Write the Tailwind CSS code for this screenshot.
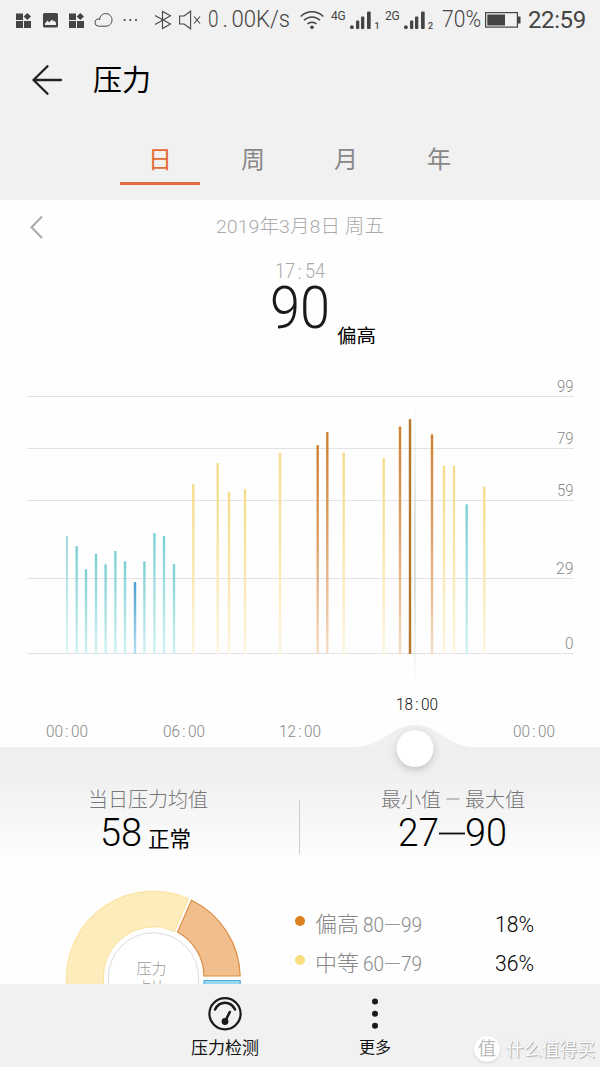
<!DOCTYPE html>
<html lang="zh-CN">
<head>
    <meta charset="UTF-8">
    <meta name="viewport" content="width=device-width, initial-scale=1.0">
    <title>压力</title>
    <script src="https://cdn.jsdelivr.net/npm/@tailwindcss/browser@4"></script>
</head>
<body class="bg-white">
<div class="w-[600px] h-[1067px] overflow-hidden flex flex-col bg-[#fefefe] font-['Roboto','Noto_Sans_CJK_SC',sans-serif] whitespace-nowrap">

    <header class="h-[200px] shrink-0 bg-[#f1f1f1]">
        <!-- Status bar -->
        <div class="h-10 flex items-center pl-4 text-[#444]">
            <svg class="w-[15px] h-[15px] shrink-0" viewBox="0 0 15 15" fill="currentColor"><path d="M0 .5h7v6.500H0zM0 8h7v7H0zM8 8h7v7H8zM11.300 0l3.700 3.500-3.700 3.500-3.700-3.500z"/></svg>
            <svg class="w-[15px] h-[15px] shrink-0 ml-3" viewBox="0 0 15 15"><rect width="15" height="14.5" rx="1.5" fill="currentColor"/><path d="M2 12v-1.500l2.500-3 1.700 2L9 6.500l1.500 2 1-1 1.500 2.500v2z" fill="#f1f1f1"/></svg>
            <svg class="w-[15px] h-[15px] shrink-0 ml-[11px]" viewBox="0 0 15 15" fill="currentColor"><path d="M0 .5h7v6.500H0zM0 8h7v7H0zM8 8h7v7H8zM11.300 0l3.700 3.500-3.700 3.500-3.700-3.500z"/></svg>
            <svg class="w-[19px] h-[14px] shrink-0 ml-[10px]" viewBox="0 0 19 14" fill="none" stroke="currentColor"><path d="M4.300 13.200a3.700 3.700 0 0 1-.4-7.300c.8 0 1.400.3 1.900.7C5.500 3 8.500.6 11.500.6c4 0 6.500 2.800 6.500 6.200 0 3.600-2.600 6.400-6 6.400z"/></svg>
            <svg class="w-[15px] h-[4px] shrink-0 ml-[10px]" viewBox="0 0 15 4" fill="currentColor"><circle cx="1.600" cy="2" r="1.100"/><circle cx="7.300" cy="2" r="1.100"/><circle cx="13" cy="2" r="1.100"/></svg>
            <svg class="w-[18px] h-[20px] shrink-0 ml-[16px]" viewBox="0 0 18 20" fill="none" stroke="currentColor" stroke-width="1.100"><path d="M1 5.500l15.500 8.500-8 4.500V1.500l8 4.300L1 14.500"/></svg>
            <svg class="w-[22px] h-[20px] shrink-0 ml-[7px]" viewBox="0 0 22 20" fill="none" stroke="currentColor" stroke-width="1.100"><path d="M.6 6h4.500l6.500-4.800v17.600L5.100 14H.6zM15 6.500l6 7M21 6.500l-6 7"/></svg>
            <svg class="w-[84px] h-[30px] shrink-0 ml-[7px] overflow-visible" viewBox="0 0 84 30" fill="currentColor" font-size="23" font-weight="300"><text x="0" y="21.500" textLength="10.500" lengthAdjust="spacingAndGlyphs">0</text><text x="14.500" y="21.500">.</text><text x="23.500" y="21.500" textLength="58.500" lengthAdjust="spacingAndGlyphs">00K/s</text></svg>
            <svg class="w-[24px] h-[20px] shrink-0 ml-[8px]" viewBox="0 0 24 20" fill="none" stroke="currentColor" stroke-width="1.500"><path d="M.7 6.500C7 0 17 0 23.300 6.500M4 10.300c4.500-4.500 11.500-4.500 16 0M7.500 14c2.500-2.500 6.500-2.500 9 0"/><circle cx="12" cy="17.300" r="1.800" fill="currentColor" stroke="none"/></svg>
            <span class="w-[19px] ml-[7px] -mt-2 text-xs leading-none tracking-tight">4G</span>
            <svg class="w-[29px] h-[20px] shrink-0" viewBox="0 0 29 20" fill="currentColor"><circle cx="1.900" cy="17.200" r="1.900"/><rect x="6" y="10.500" width="3.300" height="8.600" rx="1"/><rect x="11" y="6.500" width="3.300" height="12.600" rx="1"/><rect x="17" y="1.500" width="3.700" height="17.600" rx="1"/><text x="24.500" y="19" font-size="9" font-weight="500">1</text></svg>
            <span class="w-[19px] ml-[6px] -mt-2 text-xs leading-none tracking-tight">2G</span>
            <svg class="w-[31px] h-[20px] shrink-0" viewBox="0 0 31 20" fill="currentColor"><circle cx="1.900" cy="17.200" r="1.900"/><rect x="6" y="10.500" width="3.300" height="8.600" rx="1"/><rect x="11" y="6.500" width="3.300" height="12.600" rx="1"/><rect x="17" y="1.500" width="3.700" height="17.600" rx="1"/><text x="24" y="19" font-size="9" font-weight="500">2</text></svg>
            <svg class="w-[41px] h-[30px] shrink-0 ml-[7px] overflow-visible" viewBox="0 0 41 30" fill="currentColor"><text x="0" y="21.500" font-size="23" font-weight="300" textLength="39" lengthAdjust="spacingAndGlyphs">70%</text></svg>
            <svg class="w-[36px] h-[16px] shrink-0 ml-[2px]" viewBox="0 0 36 16"><rect x=".6" y=".6" width="31.800" height="14.500" fill="none" stroke="currentColor" stroke-width="1.200"/><path d="M2.300 2.500h17.700v11H2.300zM32.500 4.500h3v7h-3z" fill="currentColor"/></svg>
            <span class="ml-[7px] text-[24px] leading-none tracking-[-0.4px]">22:59</span>
        </div>

        <!-- Title -->
        <div class="h-20 flex items-center pl-8">
            <svg class="w-[31px] h-[30px]" viewBox="0 0 31 30" fill="none" stroke="#222" stroke-width="2.300" stroke-linecap="round" stroke-linejoin="round"><path d="M15.500 1.200L1.500 15l14 13.800M1.500 15h27.500"/></svg>
            <h1 class="ml-[30px] pt-[3px] text-[29px] leading-none text-black">压力</h1>
        </div>

        <!-- Tabs -->
        <nav class="flex pl-[120px] gap-[13px] text-2xl text-[#888]">
            <a class="w-20 h-[65px] border-b-[3px] border-[#e06f3c] text-[#e56a33] text-center leading-[81px]">日</a>
            <a class="w-20 h-[65px] text-center leading-[81px]">周</a>
            <a class="w-20 h-[65px] text-center leading-[81px]">月</a>
            <a class="w-20 h-[65px] text-center leading-[81px]">年</a>
        </nav>
    </header>

    <!-- Date and the selected reading -->
    <section class="h-[160px] shrink-0">
        <div class="h-[52px] flex items-center pl-[29px]">
            <svg class="w-4 h-6 mt-[1px]" viewBox="0 0 16 24" fill="none" stroke="#aaa" stroke-width="2"><path d="M13 1.500L2.500 12.300 13 23"/></svg>
            <svg class="w-[170px] h-8 ml-[171px]" viewBox="0 0 170 32" fill="#aaa" font-weight="300"><text x="0" y="22.500" font-size="19" textLength="168" lengthAdjust="spacingAndGlyphs">2019年3月8日 周五</text></svg>
        </div>
        <div class="flex pl-[270px]">
            <div class="w-[60px]">
                <svg class="w-[60px] h-[100px] overflow-visible" viewBox="0 0 60 100">
                    <g fill="#aaa" font-size="20" font-weight="300"><text x="5" y="25.500" textLength="20" lengthAdjust="spacingAndGlyphs">17</text><text x="27.500" y="26.500">:</text><text x="35" y="25.500" textLength="20" lengthAdjust="spacingAndGlyphs">54</text></g>
                    <text x="0" y="76" fill="#1a1a1a" font-size="60" font-weight="300" textLength="60" lengthAdjust="spacingAndGlyphs">90</text>
                </svg>
            </div>
            <span class="ml-[7px] mt-[75px] text-[19.500px] leading-none text-black">偏高</span>
        </div>
    </section>

    <!-- Day chart, its slider handle hangs over the summary -->
    <svg id="chart" class="relative z-10 w-[600px] h-[387px] shrink-0 overflow-visible" viewBox="0 360 600 387">
        <defs>
            <linearGradient id="teal" x2="0" y2="1"><stop stop-color="#7ccfd2"/><stop offset="1" stop-color="#d3f2f3"/></linearGradient>
            <linearGradient id="blue" x2="0" y2="1"><stop stop-color="#4a9fd0"/><stop offset="1" stop-color="#b5dff0"/></linearGradient>
            <linearGradient id="yellow" x2="0" y2="1"><stop stop-color="#f5dc8c"/><stop offset=".5" stop-color="#f9e7ae"/><stop offset="1" stop-color="#fdf6de"/></linearGradient>
            <linearGradient id="orange" x2="0" y2="1"><stop stop-color="#cc8030"/><stop offset=".45" stop-color="#dda068"/><stop offset="1" stop-color="#f5dcc4"/></linearGradient>
            <linearGradient id="marker" x2="0" y2="1"><stop stop-color="#d4d4d4" stop-opacity="0"/><stop offset=".45" stop-color="#d4d4d4"/><stop offset=".65" stop-color="#d4d4d4"/><stop offset="1" stop-color="#d4d4d4" stop-opacity="0"/></linearGradient>
            <filter id="shadow" x="-50%" y="-50%" width="200%" height="200%"><feDropShadow dx="0" dy="3" stdDeviation="4" flood-color="#000" flood-opacity=".2"/></filter>
        </defs>
        <path d="M27 396.500h547M27 448.500h547M27 500.500h547M27 578.500h547M27 653.500h547" stroke="#e2e2e2"/>
        <rect x="414.200" y="400" width="1.500" height="288" fill="url(#marker)"/>
        <g id="bars"></g>
        <g fill="#888" font-size="17" font-weight="300">
            <text x="557" y="391.500" textLength="16.500" lengthAdjust="spacingAndGlyphs">99</text>
            <text x="557" y="443.500" textLength="16.500" lengthAdjust="spacingAndGlyphs">79</text>
            <text x="557" y="495.500" textLength="16.500" lengthAdjust="spacingAndGlyphs">59</text>
            <text x="556" y="573.500" textLength="17.500" lengthAdjust="spacingAndGlyphs">29</text>
            <text x="565" y="648.500" textLength="8.500" lengthAdjust="spacingAndGlyphs">0</text>
        </g>
        <g id="hours" font-size="17" font-weight="300"></g>
        <path d="M350 747.500C385 747.500 390 725 415 725S445 747.500 480 747.500z" fill="#f0f0f0"/>
        <circle cx="415" cy="748.500" r="18.300" fill="#fff" filter="url(#shadow)"/>
    </svg>

    <!-- Summary -->
    <section class="h-[237px] shrink-0 bg-linear-to-b from-[#efefef] from-0% via-[#f1f1f1] via-15% to-[#fefefe] to-50%">
        <div class="h-[125px] flex">
            <div class="w-[299px] pl-[88px] pt-[43px]">
                <p class="text-[20px] leading-5 font-light text-[#777]">当日压力均值</p>
                <div class="flex h-[50px]">
                    <svg class="w-[42px] h-[50px] ml-[12px] overflow-visible" viewBox="0 0 42 50"><text x="0" y="36" font-size="39" font-weight="300" textLength="42" lengthAdjust="spacingAndGlyphs">58</text></svg>
                    <span class="ml-[6px] mt-[19px] text-[21.500px] leading-none text-black">正常</span>
                </div>
            </div>
            <div class="w-px h-[54px] mt-[53px] bg-[#ccc]"></div>
            <div class="pl-[81px] pt-[42px]">
                <svg class="w-[146px] h-5 overflow-visible" viewBox="0 0 146 20" font-size="20" font-weight="300" fill="#777"><text x="0" y="17.500" textLength="60">最小值</text><path d="M65.500 10h13" stroke="#888"/><text x="84" y="17.500" textLength="60">最大值</text></svg>
                <svg class="w-[110px] h-[50px] ml-[17px] overflow-visible" viewBox="0 0 110 50"><g font-size="39" font-weight="300"><text x="0" y="37" textLength="41" lengthAdjust="spacingAndGlyphs">27</text><text x="67" y="37" textLength="42" lengthAdjust="spacingAndGlyphs">90</text></g><path d="M41 24.500h26" stroke="#111" stroke-width="1.800"/></svg>
            </div>
        </div>

        <div class="h-[112px] flex overflow-hidden">
            <svg class="w-[280px] h-[112px]" viewBox="0 872 280 112">
                <path d="M188.500 898.700A86.900 86.900 0 0 0 66.500 978V990H103.500V978A49.800 49.800 0 0 1 174.500 931.500Z" fill="#fdedbd" stroke="#fbe3a0" stroke-width="1.200"/>
                <path d="M191.500 900.300A86.500 86.500 0 0 1 240.200 976H204A50.500 50.500 0 0 0 177.500 932Z" fill="#f1be8d" stroke="#dd8f45" stroke-width="1.200"/>
                <path d="M204 980.500h36.200v20H204z" fill="#96d6f3" stroke="#4eaee0" stroke-width="1.200"/>
                <circle cx="153.500" cy="978" r="45.200" fill="#fff" stroke="#dcdcdf"/>
                <g font-size="15" font-weight="300" fill="#999" text-anchor="middle"><text x="151.500" y="974">压力</text><text x="151.500" y="993">占比</text></g>
            </svg>
            <div class="flex flex-col pl-[15px] pt-[33px] gap-[9px]">
                <div class="h-[30px] flex">
                    <i class="size-[10px] rounded-full bg-[#dd8120] mt-[11px]"></i>
                    <span class="ml-[10px] text-[22px] leading-[40px] font-light text-[#888]">偏高</span>
                    <svg class="w-[60px] h-[30px] ml-[4px] mt-1" viewBox="0 0 60 30" fill="#888"><g font-size="21" font-weight="300"><text x="0" y="23" textLength="21" lengthAdjust="spacingAndGlyphs">80</text><text x="38" y="23" textLength="21" lengthAdjust="spacingAndGlyphs">99</text></g><path d="M22 15.500h15" stroke="#999"/></svg>
                    <svg class="w-[40px] h-[30px] ml-[72px] mt-1" viewBox="0 0 40 30"><text x="0" y="23" font-size="22" font-weight="300" textLength="39" lengthAdjust="spacingAndGlyphs">18%</text></svg>
                </div>
                <div class="h-[30px] flex">
                    <i class="size-[10px] rounded-full bg-[#fbdc80] mt-[11px]"></i>
                    <span class="ml-[10px] text-[22px] leading-[40px] font-light text-[#888]">中等</span>
                    <svg class="w-[60px] h-[30px] ml-[4px] mt-1" viewBox="0 0 60 30" fill="#888"><g font-size="21" font-weight="300"><text x="0" y="23" textLength="21" lengthAdjust="spacingAndGlyphs">60</text><text x="38" y="23" textLength="21" lengthAdjust="spacingAndGlyphs">79</text></g><path d="M22 15.500h15" stroke="#999"/></svg>
                    <svg class="w-[40px] h-[30px] ml-[72px] mt-1" viewBox="0 0 40 30"><text x="0" y="23" font-size="22" font-weight="300" textLength="39" lengthAdjust="spacingAndGlyphs">36%</text></svg>
                </div>
            </div>
        </div>
    </section>

    <!-- Bottom bar -->
    <footer class="h-[83px] shrink-0 bg-[#f1f1f1] flex pl-[150px] text-[17px] text-[#111]">
        <a class="w-[150px] pt-3 flex flex-col items-center">
            <svg class="w-[34px] h-[36px]" viewBox="0 0 34 36" fill="none" stroke="#1a1a1a" stroke-width="2.200" stroke-linecap="round"><circle cx="17" cy="17.700" r="15.600"/><path d="M7 13.500c4.500-9 15.500-9 20 0" stroke-width="2.600"/><path d="M17 25.500L21.800 16" stroke-width="2.600"/><circle cx="17" cy="25.500" r="2.300" fill="#1a1a1a"/></svg>
            <span class="leading-[32px]">压力检测</span>
        </a>
        <a class="w-[150px] pt-3 flex flex-col items-center">
            <svg class="w-2 h-[36px]" viewBox="0 0 8 36" fill="#1a1a1a"><circle cx="4" cy="5.600" r="3"/><circle cx="4" cy="17.700" r="3"/><circle cx="4" cy="29.800" r="3"/></svg>
            <span class="text-base leading-[32px]">更多</span>
        </a>
        <div class="flex items-center h-[30px] mt-[50px] ml-[24px]">
            <span class="size-[26px] rounded-full bg-white shadow-sm text-[#bbb] text-[18px] leading-[25px] text-center">值</span>
            <span class="ml-[6px] pt-[2px] text-[17.800px] text-white [text-shadow:1px_1px_1px_#aaa,0_0_1px_#bbb]">什么值得买</span>
        </div>
    </footer>
</div>

<script>
    // [x, top, colour]
    const bars = [
        [67, 536, "teal"], [76.7, 546, "teal"], [86, 569.3, "teal"], [96, 553.7, "teal"],
        [105.6, 564.3, "teal"], [115.4, 551, "teal"], [125, 561.3, "teal"], [135, 582, "blue"],
        [144.4, 561.3, "teal"], [154.4, 533, "teal"], [164, 535.7, "teal"], [174, 564, "teal"],
        [193.3, 484, "yellow"], [217.7, 463, "yellow"], [229, 491.7, "yellow"], [245, 489, "yellow"],
        [280, 452.7, "yellow"], [317.7, 445, "orange"], [327.3, 432, "orange"], [343.7, 452.7, "yellow"],
        [383.7, 458, "yellow"], [400, 426.5, "orange"], [410, 419, "dark"], [432, 434.3, "orange"],
        [444, 465.7, "yellow"], [454, 465.7, "yellow"], [466.7, 504.3, "teal"], [484.3, 486.5, "yellow"],
    ];
    document.getElementById("bars").innerHTML = bars.map(([x, top, color], i) => {
        const w = i === 0 ? 1.5 : 2.4;
        const fill = color === "dark" ? "#b4752f" : `url(#${color})`;
        return `<rect x="${x - w / 2}" y="${top}" width="${w}" height="${654 - top}" rx="0.8" fill="${fill}"/>`;
    }).join("");

    // the colon takes the width of a digit
    const hours = [["00", 46, 737, "#888"], ["06", 163, 737, "#888"], ["12", 279, 737, "#888"], ["18", 396, 709.5, "#111"], ["00", 513, 737, "#888"]];
    document.getElementById("hours").innerHTML = hours.map(([h, x, y, color]) =>
        `<g fill="${color}"><text x="${x}" y="${y}" textLength="17" lengthAdjust="spacingAndGlyphs">${h}</text>
         <text x="${x + 19}" y="${y}">:</text>
         <text x="${x + 25}" y="${y}" textLength="17" lengthAdjust="spacingAndGlyphs">00</text></g>`
    ).join("");
</script>
</body>
</html>
